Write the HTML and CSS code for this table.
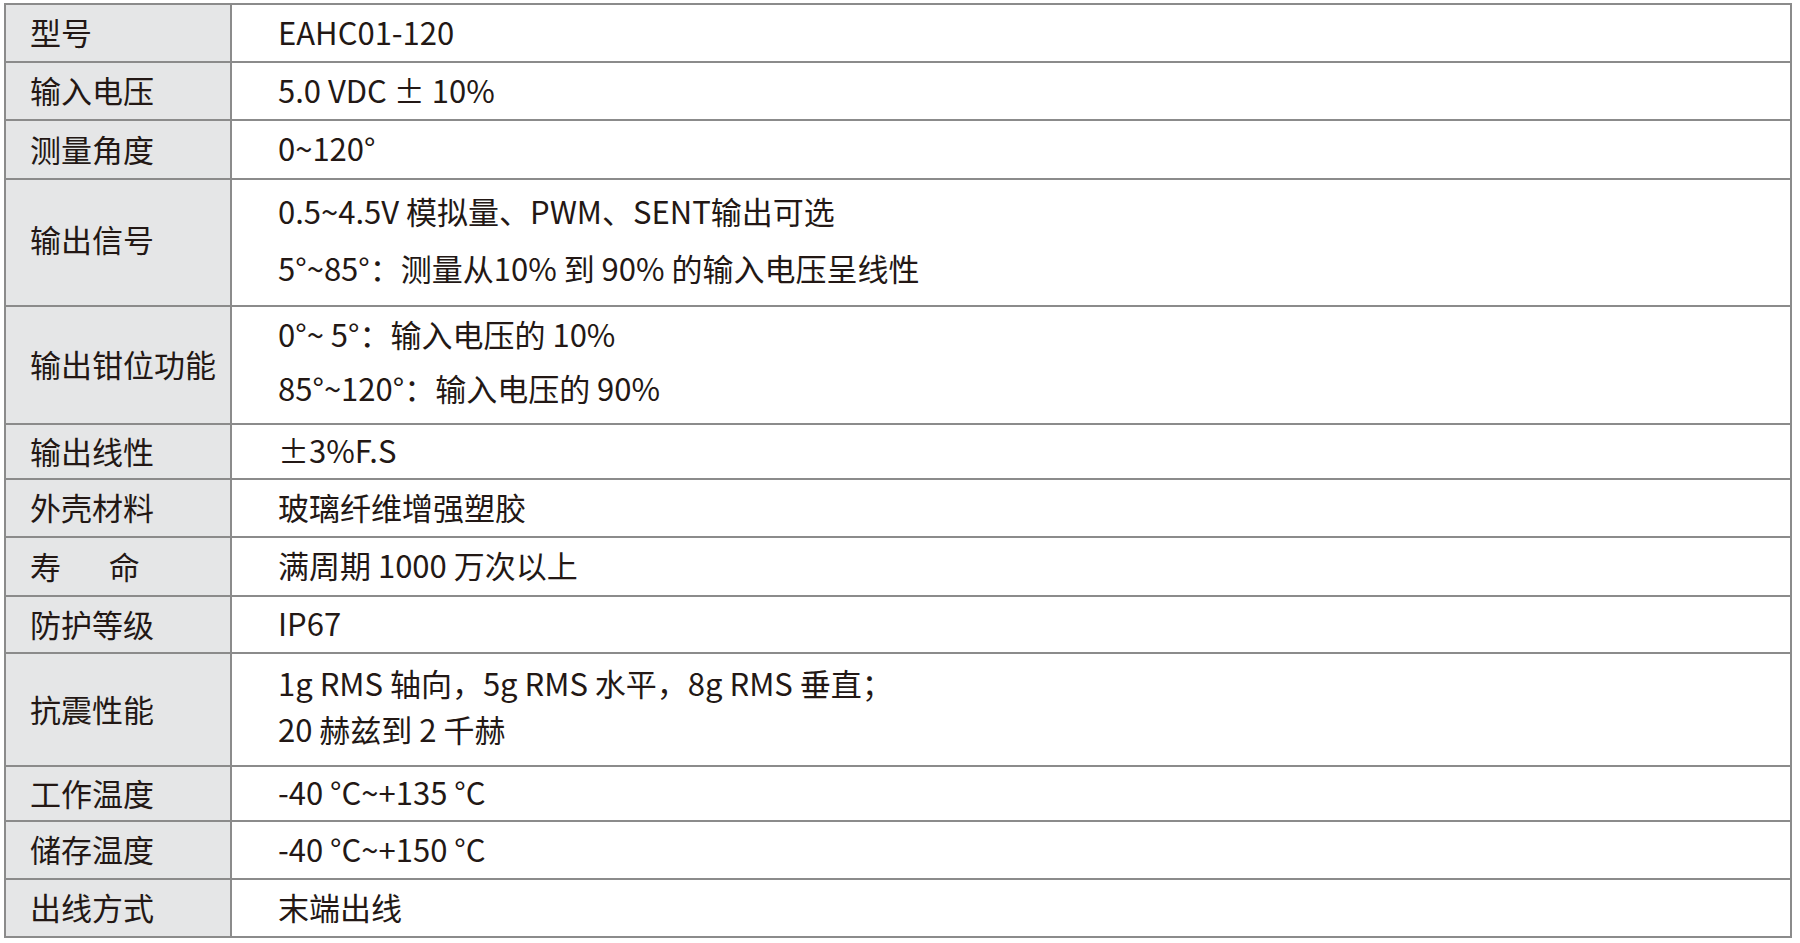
FILE: index.html
```html
<!DOCTYPE html>
<html lang="zh-CN">
<head>
<meta charset="utf-8">
<title>EAHC01-120 参数</title>
<link rel="stylesheet" href="styles.css">
</head>
<body>
<div class="spec">
  <div class="row h56"><div class="label">型号</div><div class="value">EAHC01-120</div></div>
  <div class="row h58"><div class="label">输入电压</div><div class="value">5.0 VDC ± 10%</div></div>
  <div class="row h59"><div class="label">测量角度</div><div class="value">0~120°</div></div>
  <div class="row h127"><div class="label up4">输出信号</div><div class="value lh57"><div>0.5~4.5V 模拟量、PWM、SENT输出可选</div><div>5°~85°：测量从10% 到 90% 的输入电压呈线性</div></div></div>
  <div class="row h118"><div class="label">输出钳位功能</div><div class="value lh54"><div>0°~ 5°：输入电压的 10%</div><div>85°~120°：输入电压的 90%</div></div></div>
  <div class="row h55"><div class="label">输出线性</div><div class="value">±3%F.S</div></div>
  <div class="row h58"><div class="label">外壳材料</div><div class="value">玻璃纤维增强塑胶</div></div>
  <div class="row h59"><div class="label"><span class="spread">寿　命</span></div><div class="value">满周期 1000 万次以上</div></div>
  <div class="row h57"><div class="label">防护等级</div><div class="value">IP67</div></div>
  <div class="row h113"><div class="label">抗震性能</div><div class="value lh46"><div>1g RMS 轴向，5g RMS 水平，8g RMS 垂直；</div><div>20 赫兹到 2 千赫</div></div></div>
  <div class="row h55"><div class="label">工作温度</div><div class="value">-40 °C~+135 °C</div></div>
  <div class="row h58"><div class="label">储存温度</div><div class="value">-40 °C~+150 °C</div></div>
  <div class="row h58"><div class="label">出线方式</div><div class="value">末端出线</div></div>
</div>
</body>
</html>
```
FILE: styles.css
```css
html, body {
  margin: 0;
  padding: 0;
  background: #ffffff;
}
body {
  padding: 3px 0 0 4px;
  font-family: "Noto Sans CJK SC", "Noto Sans", sans-serif;
  font-size: 31px;
  color: #231815;
}
.spec {
  box-sizing: border-box;
  width: 1788px;
  border: 2px solid #8b8b8b;
}
.row {
  box-sizing: border-box;
  display: grid;
  grid-template-columns: 226px 1fr;
  grid-template-rows: minmax(0, 1fr);
  border-top: 2px solid #8b8b8b;
}
.row:first-child {
  border-top: none;
}
.label {
  box-sizing: border-box;
  background: #e5e6e7;
  border-right: 2px solid #8b8b8b;
  padding: 0 0 2px 24px;
  display: flex;
  align-items: center;
  line-height: 1.2;
}
.label.up4 { padding-bottom: 7px; }
.value {
  box-sizing: border-box;
  padding: 0 0 3px 46px;
  display: flex;
  flex-direction: column;
  justify-content: center;
  line-height: 1.2;
}
.lh57 { line-height: 57px; padding-bottom: 8px; }
.lh54 { line-height: 54px; padding-bottom: 8px; }
.lh46 { line-height: 46px; padding-bottom: 8px; }
.spread { letter-spacing: 0.27em; }
.h55 { height: 55px; }
.h56 { height: 56px; }
.h57 { height: 57px; }
.h58 { height: 58px; }
.h59 { height: 59px; }
.h113 { height: 113px; }
.h118 { height: 118px; }
.h127 { height: 127px; }
```
